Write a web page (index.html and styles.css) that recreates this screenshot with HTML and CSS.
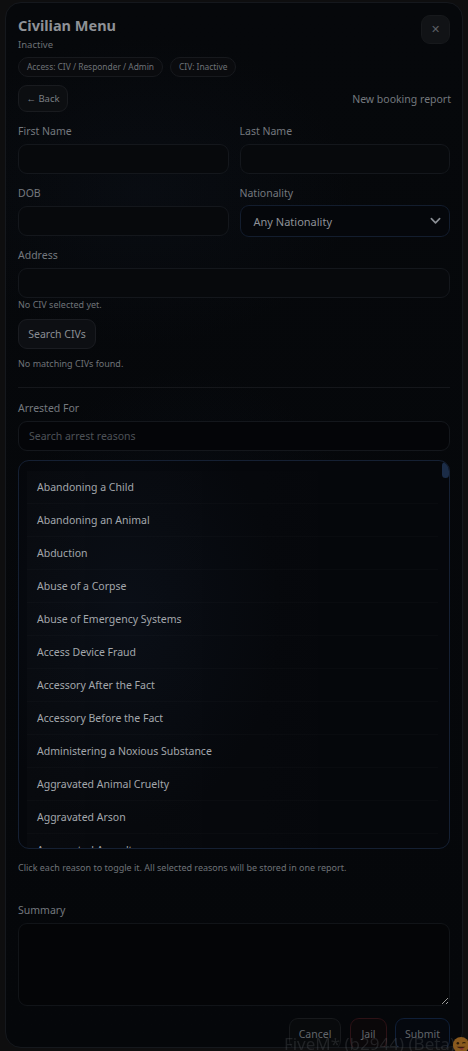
FILE: index.html
```html
<!DOCTYPE html>
<html lang="en">
<head>
<meta charset="utf-8">
<title>Civilian Menu</title>
<link rel="stylesheet" href="styles.css">
</head>
<body>
<div class="panel">
  <header class="head">
    <div class="head-main">
      <h1 class="title">Civilian Menu</h1>
      <div class="status">Inactive</div>
      <div class="chips">
        <span class="chip">Access: CIV / Responder / Admin</span>
        <span class="chip">CIV: Inactive</span>
      </div>
    </div>
    <button class="close" type="button">&#x2715;</button>
  </header>

  <div class="nav-row">
    <button class="btn btn-back" type="button">&larr; Back</button>
    <span class="nav-title">New booking report</span>
  </div>

  <div class="grid2">
    <div class="field">
      <label class="lbl">First Name</label>
      <input class="inp" type="text">
    </div>
    <div class="field">
      <label class="lbl">Last Name</label>
      <input class="inp" type="text">
    </div>
    <div class="field">
      <label class="lbl">DOB</label>
      <input class="inp" type="text">
    </div>
    <div class="field">
      <label class="lbl">Nationality</label>
      <div class="select">
        <span>Any Nationality</span>
        <svg class="chev" viewBox="0 0 12 8" width="11" height="8"><path d="M1.5 1.5 L6 6 L10.5 1.5" fill="none" stroke="#8a8e94" stroke-width="1.8" stroke-linecap="round" stroke-linejoin="round"/></svg>
      </div>
    </div>
  </div>

  <div class="field field-addr">
    <label class="lbl">Address</label>
    <input class="inp" type="text">
  </div>
  <div class="note note-tight">No CIV selected yet.</div>
  <button class="btn btn-search" type="button">Search CIVs</button>
  <div class="note note-found">No matching CIVs found.</div>

  <hr class="divider">

  <div class="field">
    <label class="lbl">Arrested For</label>
    <input class="inp inp-search" type="text" placeholder="Search arrest reasons">
  </div>

  <div class="list">
    <div class="row">Abandoning a Child</div>
    <div class="row">Abandoning an Animal</div>
    <div class="row">Abduction</div>
    <div class="row">Abuse of a Corpse</div>
    <div class="row">Abuse of Emergency Systems</div>
    <div class="row">Access Device Fraud</div>
    <div class="row">Accessory After the Fact</div>
    <div class="row">Accessory Before the Fact</div>
    <div class="row">Administering a Noxious Substance</div>
    <div class="row">Aggravated Animal Cruelty</div>
    <div class="row">Aggravated Arson</div>
    <div class="row">Aggravated Assault</div>
    <div class="row">Aggravated Battery</div>
    <div class="thumb"></div>
  </div>
  <div class="note note-hint">Click each reason to toggle it. All selected reasons will be stored in one report.</div>

  <div class="field field-summary">
    <label class="lbl">Summary</label>
    <textarea class="area"></textarea>
  </div>

  <div class="actions">
    <button class="btn btn-act btn-cancel" type="button">Cancel</button>
    <button class="btn btn-act btn-jail" type="button">Jail</button>
    <button class="btn btn-act btn-submit" type="button">Submit</button>
  </div>
</div>

<div class="watermark">FiveM* (b2944) (Beta)</div>
<svg class="emoji" viewBox="0 0 20 20" width="18" height="18">
  <circle cx="10" cy="10" r="9" fill="#8a5a1e"/>
  <circle cx="6.5" cy="8" r="1.4" fill="#2b1a08"/>
  <path d="M11.5 8 q2 -1.5 3.5 0" fill="none" stroke="#2b1a08" stroke-width="1.2"/>
  <path d="M5 12 q5 4 10 0" fill="#3a1a10"/>
  <path d="M9 13.5 q2 4 4 0" fill="#8a2f3a"/>
</svg>
</body>
</html>
```

FILE: styles.css
```css
* { box-sizing: border-box; }

html, body {
  margin: 0;
  padding: 0;
  height: 100%;
  background: #0e0e0f;
  overflow: hidden;
}

body {
  font-family: "Noto Sans", "Liberation Sans", sans-serif;
  color: #8a8e94;
}

.panel {
  margin: 2px 5px 0 5px;
  height: 1046px;
  border: 1px solid #15181d;
  border-radius: 16px;
  padding: 12px 12px 0 12px;
  overflow: hidden;
  background:
    radial-gradient(ellipse 260px 300px at 40% 55%, rgba(20, 34, 58, 0.18), transparent 70%),
    radial-gradient(ellipse 300px 220px at 30% 18%, rgba(18, 26, 40, 0.25), transparent 70%),
    linear-gradient(180deg, #06080b 0%, #05070a 100%);
}

.head {
  display: flex;
  justify-content: space-between;
  align-items: flex-start;
}

.title {
  margin: 0;
  font-size: 14.5px;
  line-height: 20px;
  font-weight: 700;
  color: #8e9196;
}

.status {
  margin-top: 3px;
  font-size: 9.5px;
  line-height: 13px;
  color: #6c7075;
}

.chips {
  display: flex;
  gap: 7px;
  margin-top: 6px;
}

.chip {
  display: inline-block;
  height: 20px;
  padding: 0 8px;
  border: 1px solid #17191d;
  border-radius: 10px;
  background: #0a0b0e;
  font-size: 8.4px;
  line-height: 18px;
  color: #6e7277;
  white-space: nowrap;
}

.close {
  width: 29px;
  height: 29px;
  margin-top: 0;
  border: 1px solid #17191c;
  border-radius: 9px;
  background: #111316;
  color: #5c5f64;
  font-size: 11px;
  font-family: "DejaVu Sans", sans-serif;
  padding: 0;
  line-height: 27px;
}

.nav-row {
  display: flex;
  justify-content: space-between;
  align-items: center;
  margin-top: 8px;
}

.nav-title {
  font-size: 10.5px;
  color: #74787e;
  margin-right: -1px;
}

.btn {
  font-family: "Noto Sans", "Liberation Sans", sans-serif;
  border: 1px solid #191b1f;
  border-radius: 9px;
  background: #0c0e11;
  color: #7a7e83;
  padding: 0 10px;
  cursor: pointer;
}

.btn-back {
  height: 27px;
  font-size: 9.5px;
  width: 50px;
  padding: 0;
}

.grid2 {
  display: grid;
  grid-template-columns: 1fr 1fr;
  column-gap: 11px;
  row-gap: 12px;
  margin-top: 12px;
}

.field {
  display: flex;
  flex-direction: column;
}

.lbl {
  font-size: 10.5px;
  line-height: 14px;
  color: #74787e;
  margin-bottom: 6px;
}

.inp {
  height: 30px;
  border: 1px solid #14171c;
  border-radius: 9px;
  background: #07090c;
  color: #8a8e94;
  font-family: "Noto Sans", "Liberation Sans", sans-serif;
  font-size: 10.5px;
  padding: 0 10px;
  outline: none;
}

.select {
  height: 32px;
  margin-top: -1px;
  border: 1px solid #131d2e;
  border-radius: 9px;
  background: #05070b;
  display: flex;
  align-items: center;
  justify-content: space-between;
  padding: 0 8px 0 13px;
  font-size: 11px;
  color: #8d9197;
}

.chev { display: block; }

.field-addr { margin-top: 11px; }

.note {
  font-size: 9px;
  line-height: 12px;
  color: #6e7277;
}

.note-tight { margin-top: 1px; }

.btn-search {
  display: block;
  margin-top: 8px;
  height: 30px;
  width: 78px;
  padding: 0;
  font-size: 10.5px;
  color: #8a8e93;
  background: #0d0f13;
  border-color: #1a1c21;
}

.note-found { margin-top: 9px; }

.divider {
  border: 0;
  border-top: 1px solid #15171b;
  margin: 17px 0 0 0;
  height: 0;
}

.divider + .field { margin-top: 13px; }

.inp-search {
  background: #040508;
  padding-left: 10px;
}
.inp-search::placeholder { color: #4d5157; }

.list {
  position: relative;
  margin-top: 9px;
  height: 389px;
  border: 1px solid #152033;
  border-radius: 11px;
  background:
    radial-gradient(ellipse 220px 300px at 25% 40%, rgba(18, 30, 50, 0.25), transparent 70%),
    #05070b;
  padding: 10px 11px 0 8px;
  overflow: hidden;
}

.row {
  height: 33px;
  padding: 0 10px;
  display: flex;
  align-items: center;
  font-size: 10.5px;
  color: #a3a7ac;
  border-bottom: 1px solid rgba(255, 255, 255, 0.02);
  background: linear-gradient(90deg, rgba(255, 255, 255, 0.012), transparent 85%);
}

.thumb {
  position: absolute;
  top: 1px;
  right: 0;
  width: 7px;
  height: 16px;
  border-radius: 4px;
  background: #1b2c47;
}

.note-hint { margin-top: 13px; }

.field-summary { margin-top: 29px; }

.area {
  height: 83px;
  border: 1px solid #111418;
  border-radius: 9px;
  background: #040507;
  resize: vertical;
  outline: none;
  font-family: "Noto Sans", "Liberation Sans", sans-serif;
  color: #8a8e94;
}

.actions {
  display: flex;
  justify-content: flex-end;
  gap: 8px;
  margin-top: 12px;
}

.btn-act {
  height: 32px;
  font-size: 10.5px;
  color: #62666b;
  padding: 0;
  background: #080a0c;
  border-color: #17191c;
}

.btn-cancel { width: 52px; margin-right: 1px; }
.btn-jail { width: 37px; border-color: #2d1216; background: #0a0709; }
.btn-submit { width: 55px; border-color: #0f1f38; background: #05080e; }

.watermark {
  position: fixed;
  right: 13px;
  bottom: -4px;
  font-family: "Noto Sans", "Liberation Sans", sans-serif;
  font-size: 17px;
  line-height: 22px;
  color: rgba(120, 122, 126, 0.22);
  pointer-events: none;
  white-space: nowrap;
}

.emoji {
  position: fixed;
  right: -2px;
  bottom: -3px;
}
```
